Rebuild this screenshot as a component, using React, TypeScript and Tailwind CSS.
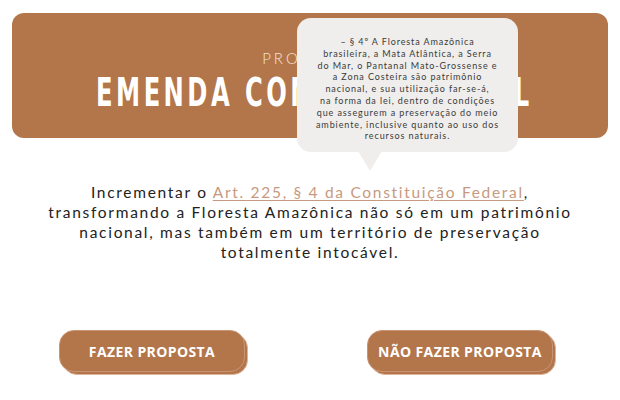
import React from "react";

const body = { fontFamily: "Lato, 'Noto Sans', sans-serif" };

const tooltipLines = [
  "– § 4º A Floresta Amazônica",
  "brasileira, a Mata Atlântica, a Serra",
  "do Mar, o Pantanal Mato-Grossense e",
  "a Zona Costeira são patrimônio",
  "nacional, e sua utilização far-se-á,",
  "na forma da lei, dentro de condições",
  "que assegurem a preservação do meio",
  "ambiente, inclusive quanto ao uso dos",
  "recursos naturais.",
];

const ActionButton: React.FC<{ label: string }> = ({ label }) => (
  <div className="relative w-[186px] h-[42px]">
    <div className="absolute inset-0 translate-x-[3px] translate-y-[3px] rounded-[15px] bg-[#b3764b] border border-[#dcb59b]" />
    <button
      type="button"
      className="relative w-full h-full rounded-[15px] bg-[#b3764b] border border-[#c99474] text-white text-[14px] font-bold tracking-[0.4px]"
      style={{ fontFamily: "'Open Sans', Lato, sans-serif" }}
    >
      {label}
    </button>
  </div>
);

export default function App() {
  return (
    <div className="w-[620px] h-[400px] bg-white relative overflow-hidden" style={body}>
      <div className="px-3 pt-[13px]">
        <div className="h-[125px] rounded-[12px] bg-[#b3764b] flex flex-col items-center pt-[38px]">
          <div className="text-[#f3e2d6] text-[15px] tracking-[3px] font-light leading-none ml-[4px]">
            PROPOSTA
          </div>
          <h1
            className="text-white text-[39px] font-bold tracking-[5px] leading-none mt-[7px] ml-[8px] whitespace-nowrap scale-x-[0.69]"
            style={{ fontFamily: "'DejaVu Sans', sans-serif", fontStretch: "condensed" }}
          >
            EMENDA CONSTITUCIONAL
          </h1>
        </div>
      </div>

      {/* tooltip over the banner */}
      <div className="absolute left-[297px] top-[18px] w-[221px] h-[134px] rounded-[14px] bg-[#efeeec] pt-[18px] flex flex-col items-center text-[#3a3a3a] text-[9px] leading-[11.8px] tracking-[0.9px]">
        {tooltipLines.map((line, i) => (
          <span key={i} className="whitespace-nowrap">
            {line}
          </span>
        ))}
        <div className="absolute left-[61px] top-[133px] w-0 h-0 border-l-[12px] border-r-[12px] border-t-[20px] border-l-transparent border-r-transparent border-t-[#efeeec]" />
      </div>

      <p className="mt-[44px] text-center text-[#222] text-[15.5px] leading-[20px] tracking-[1.7px] px-[36px]">
        Incrementar o{" "}
        <a className="text-[#c69a80] underline underline-offset-2">Art. 225, § 4 da Constituição Federal</a>,
        transformando a Floresta Amazônica não só em um patrimônio nacional, mas também em um território de
        preservação totalmente intocável.
      </p>

      <div className="flex justify-between pl-[59px] pr-[67px] mt-[68px]">
        <ActionButton label="FAZER PROPOSTA" />
        <ActionButton label="NÃO FAZER PROPOSTA" />
      </div>
    </div>
  );
}
